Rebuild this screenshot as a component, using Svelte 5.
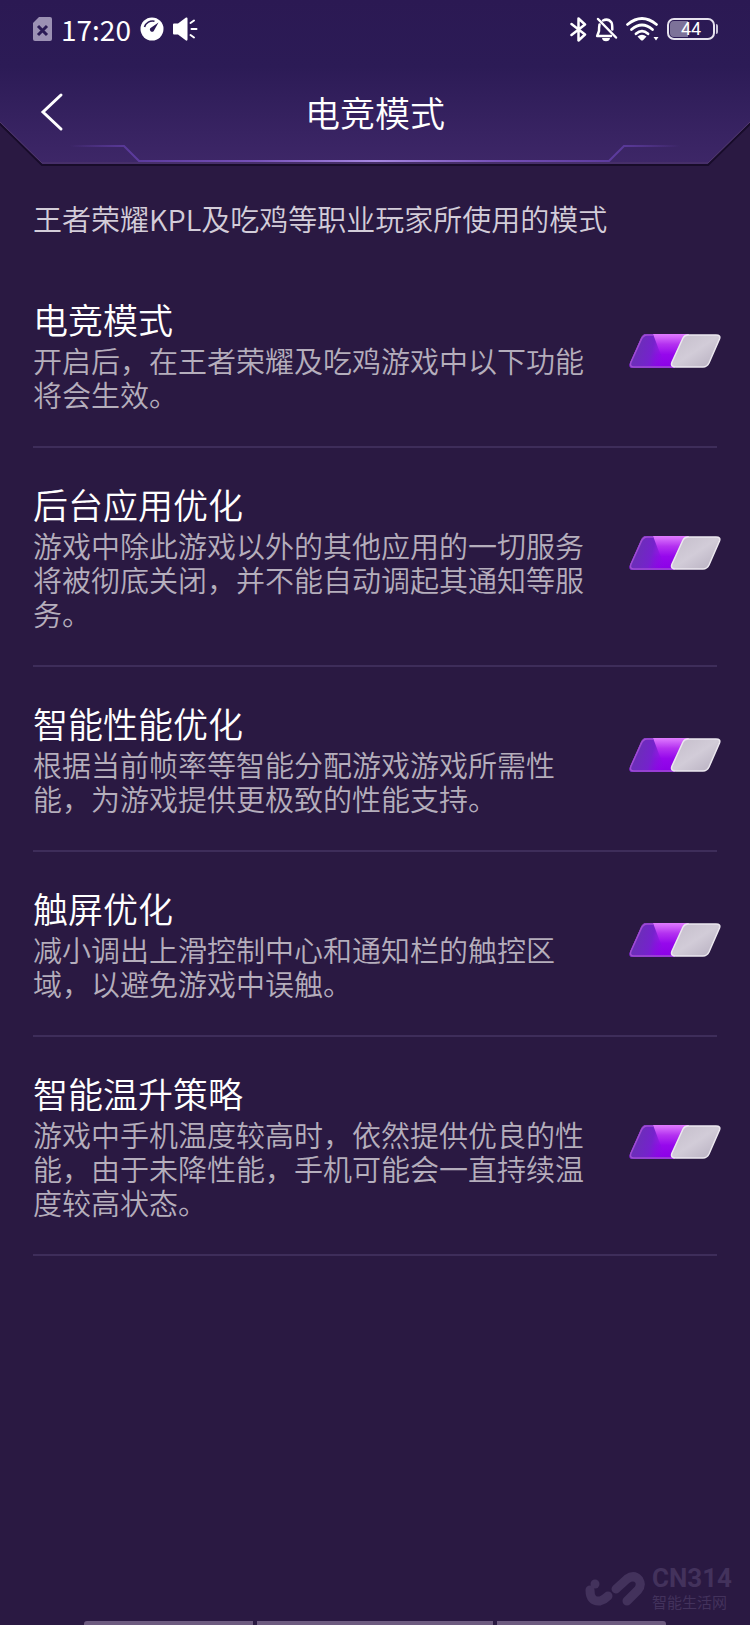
<script lang="ts">
  type Option = { id: string; title: string; desc: string; on: boolean };

  let options: Option[] = $state([
    { id: "esports", title: "电竞模式", desc: "开启后，在王者荣耀及吃鸡游戏中以下功能将会生效。", on: true },
    { id: "background", title: "后台应用优化", desc: "游戏中除此游戏以外的其他应用的一切服务将被彻底关闭，并不能自动调起其通知等服务。", on: true },
    { id: "performance", title: "智能性能优化", desc: "根据当前帧率等智能分配游戏游戏所需性能，为游戏提供更极致的性能支持。", on: true },
    { id: "touch", title: "触屏优化", desc: "减小调出上滑控制中心和通知栏的触控区域，以避免游戏中误触。", on: true },
    { id: "thermal", title: "智能温升策略", desc: "游戏中手机温度较高时，依然提供优良的性能，由于未降性能，手机可能会一直持续温度较高状态。", on: true },
  ]);

  const battery = 44;
</script>

<div class="screen">
  <header>
    <svg class="header-bg" viewBox="0 0 750 168" preserveAspectRatio="none" aria-hidden="true">
      <defs>
        <linearGradient id="panel" x1="0" y1="0" x2="0" y2="1">
          <stop offset="0" stop-color="#2b1953" />
          <stop offset="0.4" stop-color="#2c1b56" />
          <stop offset="1" stop-color="#3e2768" />
        </linearGradient>
        <linearGradient id="edge" gradientUnits="userSpaceOnUse" x1="70" y1="0" x2="680" y2="0">
          <stop offset="0" stop-color="#6440a8" stop-opacity="0" />
          <stop offset="0.1" stop-color="#5b3a9c" />
          <stop offset="0.3" stop-color="#7650b8" />
          <stop offset="0.5" stop-color="#a888e4" />
          <stop offset="0.7" stop-color="#7650b8" />
          <stop offset="0.9" stop-color="#5b3a9c" />
          <stop offset="1" stop-color="#6440a8" stop-opacity="0" />
        </linearGradient>
      </defs>
      <path d="M0 0H750V124L708 165H42L0 124Z" fill="url(#panel)" />
      <path d="M-2 122L42 165H708L752 122" fill="none" stroke="#180c2a" stroke-width="2" />
      <path d="M-2 120L42 163H708L752 120" fill="none" stroke="#51396c" stroke-width="1" />
      <path d="M70 146H124L139 161H609L624 146H680" fill="none" stroke="url(#edge)" stroke-width="2" />
    </svg>

    <div class="status-bar">
      <div class="status-group">
        <svg width="19" height="24" viewBox="0 0 19 24" aria-hidden="true">
          <path d="M6 0H17Q19 0 19 2V22Q19 24 17 24H2Q0 24 0 22V6Z" fill="#9c91b4" />
          <path d="M5 9L14 18M14 9L5 18" stroke="#2b1a55" stroke-width="3" />
        </svg>
        <time>17:20</time>
        <svg width="24" height="24" viewBox="0 0 24 24" aria-hidden="true">
          <circle cx="12" cy="12" r="11.5" fill="#fff" />
          <path d="M4.5 10A8.5 8.5 0 0 1 14.5 4.2" fill="none" stroke="#2b1a55" stroke-width="1.6" />
          <path d="M18.5 5.5L13.6 14.2A2.3 2.3 0 0 1 10.2 11.2Z" fill="#2b1a55" />
        </svg>
        <svg width="25" height="24" viewBox="0 0 25 24" aria-hidden="true">
          <path d="M0 7.5Q0 6.5 1 6.5H5L13 .5Q14.500 0 14.500 1.500V22.500Q14.500 24 13 23.500L5 17.500H1Q0 17.500 0 16.500Z" fill="#fff" />
          <path d="M17.500 6L21 3.500M18.500 12H23.500M17.500 18L21 20.500" stroke="#fff" stroke-width="2" stroke-linecap="round" />
        </svg>
      </div>

      <div class="status-group indicators">
        <svg width="17" height="25" viewBox="0 0 17 25" aria-hidden="true">
          <path d="M1.500 7L15 17.500L8.500 23.500V1.500L15 7.500L1.500 18" fill="none" stroke="#fff" stroke-width="2.500" stroke-linejoin="round" stroke-linecap="round" />
        </svg>
        <svg width="23" height="25" viewBox="0 0 23 25" aria-hidden="true">
          <path d="M8 3.500Q13 1 16.500 5.500Q17.300 7 17.300 12.500M4.500 7.500Q4 10 4 14L2.200 19H16" fill="none" stroke="#fff" stroke-width="2.500" stroke-linecap="round" stroke-linejoin="round" />
          <path d="M7 21H15Q14.500 24.300 11 24.300T7 21Z" fill="#fff" />
          <path d="M3 2L21 20.500" stroke="#fff" stroke-width="2.500" stroke-linecap="round" />
        </svg>
        <svg width="33" height="25" viewBox="0 0 33 25" aria-hidden="true">
          <path d="M1.500 7.500Q16 -4.500 30.500 7.500M5.500 12.500Q16 3.500 26.500 12.500M10 16.800Q16 11.500 22 16.800" fill="none" stroke="#fff" stroke-width="2.700" stroke-linecap="round" />
          <path d="M11.500 19.500Q16 16 20.500 19.500L17 23.200Q16 24 15 23.200Z" fill="#fff" />
          <path d="M27.500 20H32.500L30 23.500Z" fill="#fff" />
        </svg>
        <div class="battery">
          <span class="battery-cell">
            <span class="battery-level" style={`width: ${battery}%`}></span>
            <span class="battery-text">{battery}</span>
          </span>
          <span class="battery-tip"></span>
        </div>
      </div>
    </div>

    <div class="title-bar">
      <button class="back" aria-label="返回">
        <svg width="24" height="40" viewBox="0 0 24 40" aria-hidden="true">
          <path d="M21 3L3 20L21 37" fill="none" stroke="#fff" stroke-width="3" stroke-linecap="round" />
        </svg>
      </button>
      <h1>电竞模式</h1>
    </div>
  </header>

  <main>
    <p class="intro">王者荣耀KPL及吃鸡等职业玩家所使用的模式</p>

    {#each options as option (option.id)}
      <section class="option">
        <div class="option-text">
          <h2 id={`${option.id}-title`}>{option.title}</h2>
          <p id={`${option.id}-desc`}>{option.desc}</p>
        </div>
        <label class="toggle" class:off={!option.on}>
          <input
            type="checkbox"
            bind:checked={option.on}
            aria-labelledby={`${option.id}-title`}
            aria-describedby={`${option.id}-desc`}
          />
          <svg width="92" height="34" viewBox="0 0 92 34" aria-hidden="true">
            <defs>
              <linearGradient id={`${option.id}-track`} x1="0" y1="0" x2="0" y2="1">
                <stop offset="0" stop-color="#e07cff" />
                <stop offset="0.3" stop-color="#b432f0" />
                <stop offset="0.6" stop-color="#9608ec" />
                <stop offset="1" stop-color="#8a00e6" />
              </linearGradient>
              <linearGradient id={`${option.id}-shade`} gradientUnits="userSpaceOnUse" x1="4" y1="20" x2="36" y2="30">
                <stop offset="0" stop-color="#6a30b6" />
                <stop offset="0.5" stop-color="#7522cc" />
                <stop offset="1" stop-color="#9008e8" stop-opacity="0" />
              </linearGradient>
              <linearGradient id={`${option.id}-knob`} x1="0" y1="0" x2="1" y2="1">
                <stop offset="0" stop-color="#c4bdca" />
                <stop offset="0.5" stop-color="#d2ccd8" />
                <stop offset="1" stop-color="#b5adbe" />
              </linearGradient>
            </defs>
            <path class="track" d="M17 0H60L46 34H4Q-1 34 1 29L12 4Q14 0 17 0Z" fill={`url(#${option.id}-track)`} />
            <path class="track" d="M17 0H24L30 16L38 34H4Q-1 34 1 29L12 4Q14 0 17 0Z" fill={`url(#${option.id}-shade)`} />
            <path class="track" d="M46 33H5Q0 33 2 28L12.500 5Q14.500 1 18 1H24" fill="none" stroke="#a04cd4" stroke-width="1.500" />
            <path class="knob" d="M59 1H87Q92 1 90.500 5L80 29Q78 33 74 33H47Q41 33 43 28L54 4Q55.500 1 59 1Z" fill={`url(#${option.id}-knob)`} stroke="#ece8ef" stroke-width="1.500" />
          </svg>
        </label>
      </section>
    {/each}
  </main>

  <footer>
    <div class="watermark">
      <svg width="60" height="36" viewBox="0 0 60 36" aria-hidden="true">
        <path d="M5 19Q5 31 15 30Q19 29 23 25" fill="none" stroke="currentColor" stroke-width="9" stroke-linecap="round" />
        <circle cx="10" cy="13" r="4.500" fill="currentColor" />
        <path d="M31 18L42 8Q49 3 54 9Q57 14 53 19L42 30" fill="none" stroke="currentColor" stroke-width="9" stroke-linecap="round" stroke-linejoin="round" />
      </svg>
      <div class="watermark-text">
        <strong>CN314</strong>
        <span>智能生活网</span>
      </div>
    </div>
    <div class="dock">
      <span></span>
      <span></span>
      <span></span>
    </div>
  </footer>
</div>

<style>
  :global(body) {
    background: #2a1942;
  }

  .screen {
    min-height: 100vh;
    display: flex;
    flex-direction: column;
    background: #2a1942;
    color: #fff;
    font-family: "Noto Sans CJK SC", sans-serif;
    font-weight: 350;
  }

  h1,
  h2,
  p {
    margin: 0;
    font-weight: 350;
  }

  header {
    position: relative;
  }

  .header-bg {
    position: absolute;
    inset: 0;
    width: 100%;
    height: 100%;
  }

  .status-bar {
    position: relative;
    height: 58px;
    padding: 0 32px 0 33px;
    display: flex;
    align-items: center;
    justify-content: space-between;
  }

  .status-group {
    display: flex;
    align-items: center;
    gap: 9px;
  }

  .status-group.indicators {
    gap: 8px;
  }

  time {
    font-size: 28px;
    line-height: 32px;
    font-weight: 400;
  }

  .battery {
    display: flex;
    align-items: center;
    gap: 1px;
  }

  .battery-cell {
    position: relative;
    width: 48px;
    height: 22px;
    box-sizing: border-box;
    border: 2px solid #e6e2ee;
    border-radius: 7px;
    padding: 1px;
    display: flex;
  }

  .battery-level {
    background: #7d7299;
    border-radius: 4px 0 0 4px;
  }

  .battery-text {
    position: absolute;
    inset: 0;
    font-family: Roboto, sans-serif;
    font-size: 18px;
    line-height: 18px;
    font-weight: 400;
    text-align: center;
  }

  .battery-tip {
    width: 2px;
    height: 10px;
    border-radius: 0 2px 2px 0;
    background: #c9c3d8;
  }

  .title-bar {
    position: relative;
    height: 110px;
    box-sizing: border-box;
    padding: 0 40px 2px;
    display: grid;
    grid-template-columns: 24px 1fr 24px;
    align-items: center;
  }

  .back {
    padding: 0;
    border: 0;
    background: none;
    display: flex;
    cursor: pointer;
  }

  h1 {
    font-size: 35px;
    line-height: 48px;
    text-align: center;
  }

  main {
    flex: 1;
    padding: 26px 33px;
  }

  .intro {
    margin-bottom: 21px;
    font-size: 29px;
    line-height: 48px;
    color: #d3cdd9;
  }

  .option {
    display: flex;
    align-items: center;
    gap: 28px;
    padding: 32px 0 35px;
    border-bottom: 2px solid #3e2d5a;
  }

  .option-text {
    flex: 1;
  }

  .option h2 {
    font-size: 35px;
    line-height: 48px;
  }

  .option p {
    font-size: 29px;
    line-height: 34px;
    color: #b5aebc;
  }

  .toggle {
    position: relative;
    display: flex;
    margin: 0 -4px 4px 0;
  }

  .toggle input {
    position: absolute;
    inset: 0;
    width: 100%;
    height: 100%;
    margin: 0;
    opacity: 0;
    cursor: pointer;
  }

  .toggle.off .track {
    filter: grayscale(1);
  }

  .toggle.off .knob {
    transform: translateX(-42px);
  }

  .watermark {
    display: flex;
    align-items: center;
    justify-content: flex-end;
    gap: 7px;
    padding: 0 18px 8px;
    color: #43325c;
  }

  .watermark-text {
    display: flex;
    flex-direction: column;
  }

  .watermark strong {
    font-family: Roboto, sans-serif;
    font-size: 26px;
    line-height: 26px;
    font-weight: 700;
  }

  .watermark span {
    font-size: 15px;
    line-height: 22px;
    font-weight: 400;
  }

  .dock {
    display: grid;
    grid-template-columns: 170fr 236fr 170fr;
    gap: 4px;
    padding: 0 84px;
  }

  .dock span {
    height: 4px;
    background: #6d5b80;
  }

  .dock span:first-child {
    border-top-left-radius: 3px;
  }

  .dock span:last-child {
    border-top-right-radius: 3px;
  }
</style>
